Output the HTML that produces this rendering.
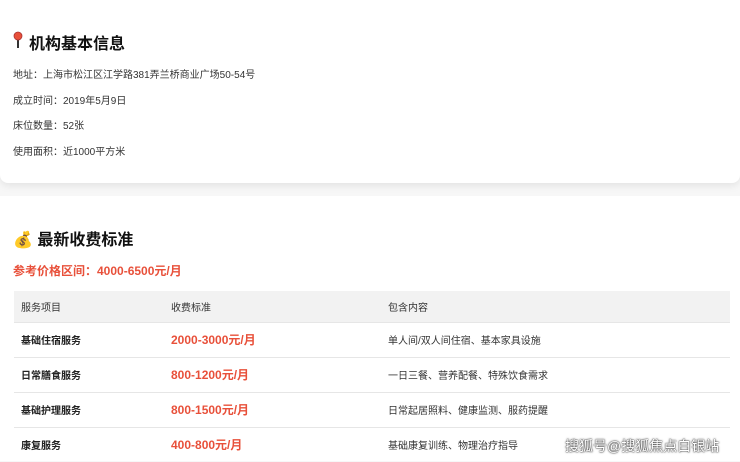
<!DOCTYPE html>
<html><head><meta charset="utf-8"><style>
*{margin:0;padding:0;box-sizing:border-box}
body{width:740px;height:461px;overflow:hidden;background:#f7f7f7;font-family:"Liberation Sans","Noto Sans CJK SC",sans-serif;color:#333;position:relative}
.c1{position:absolute;left:0;top:0;width:740px;height:183px;background:#fff;border-radius:0 0 8px 8px;box-shadow:0 3px 8px rgba(0,0,0,.08)}
.c2{position:absolute;left:0;top:196px;width:740px;height:265px;background:#fff}
h2{position:absolute;font-size:16px;font-weight:bold;color:#111}
.p{position:absolute;left:13px;font-size:10px;color:#333}
.price{position:absolute;left:13px;top:262px;font-size:12px;font-weight:bold;color:#e8503a}
table{position:absolute;left:14px;top:291px;width:716px;border-collapse:collapse;font-size:10px}
th{background:#f2f2f2;height:31px;text-align:left;font-weight:normal;color:#333}
td{height:35px;border-top:1px solid #e6e6e6}
th:first-child,td:first-child{padding-left:7px;width:157px}
th:nth-child(2),td:nth-child(2){width:217px}
td:first-child{font-weight:bold;color:#222}
td.r{color:#e8503a;font-weight:bold;font-size:12px}
.wm{position:absolute;left:565px;top:436px;font-size:14px;color:#fff;text-shadow:0 0 2px #333,0 0 1px #000}
</style></head><body>
<div class="c1">
<svg style="position:absolute;left:13px;top:31px" width="10" height="18" viewBox="0 0 10 18"><line x1="5" y1="6" x2="5" y2="17" stroke="#333" stroke-width="2"/><circle cx="5" cy="5" r="4" fill="#e8503a" stroke="#a33" stroke-width="0.8"/></svg>
<h2 style="left:29px;top:30px">机构基本信息</h2>
<div class="p" style="top:66px">地址：上海市松江区江学路381弄兰桥商业广场50-54号</div>
<div class="p" style="top:92px">成立时间：2019年5月9日</div>
<div class="p" style="top:117px">床位数量：52张</div>
<div class="p" style="top:143px">使用面积：近1000平方米</div>
</div>
<div class="c2"></div>
<h2 style="left:13px;top:226px">💰 最新收费标准</h2>
<div class="price">参考价格区间：4000-6500元/月</div>
<table>
<tr><th>服务项目</th><th>收费标准</th><th>包含内容</th></tr>
<tr><td>基础住宿服务</td><td class="r">2000-3000元/月</td><td>单人间/双人间住宿、基本家具设施</td></tr>
<tr><td>日常膳食服务</td><td class="r">800-1200元/月</td><td>一日三餐、营养配餐、特殊饮食需求</td></tr>
<tr><td>基础护理服务</td><td class="r">800-1500元/月</td><td>日常起居照料、健康监测、服药提醒</td></tr>
<tr><td>康复服务</td><td class="r">400-800元/月</td><td>基础康复训练、物理治疗指导</td></tr>
</table>
<div class="wm">搜狐号@搜狐焦点白银站</div>
</body></html>
